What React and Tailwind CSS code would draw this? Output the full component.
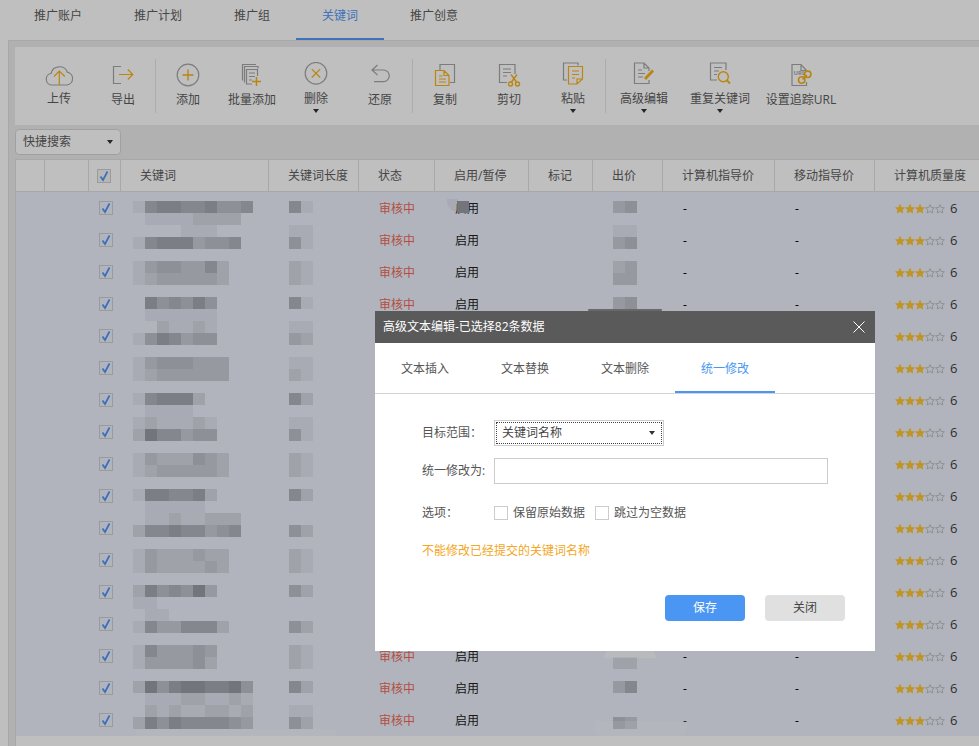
const GRAY = '#a6a6a6';
const GOLD = '#f8b31a';

const navTabs = ['推广账户', '推广计划', '推广组', '关键词', '推广创意'];

const columns = [
  { label: '', width: 'w-[29px]' },
  { label: '', width: 'w-[44px]' },
  { label: '', width: 'w-[32px]' },
  { label: '关键词', width: 'w-[148px]' },
  { label: '关键词长度', width: 'w-[90px]' },
  { label: '状态', width: 'w-[76px]' },
  { label: '启用/暂停', width: 'w-[94px]' },
  { label: '标记', width: 'w-[64px]' },
  { label: '出价', width: 'w-[70px]' },
  { label: '计算机指导价', width: 'w-[112px]' },
  { label: '移动指导价', width: 'w-[100px]' },
  { label: '计算机质量度', width: 'w-[110px]' },
];

const tones = {
  0: '',
  1: 'bg-black/5',
  2: 'bg-black/10',
  3: 'bg-black/15',
  4: 'bg-black/20',
  5: 'bg-black/25',
  6: 'bg-black/30',
  7: 'bg-black/35',
};

// redacted cells, one string per 12px line
const keywordBlur = [
  '1566556445', '0111122220', '0000111000', '1566634450', '', '1344335200', '1233333200', '',
  '0645464000', '0111111000', '0021121000', '1465344000', '', '1344433300', '1233333300', '',
  '1566620000', '0111100000', '1211121000', '2755344000', '', '1322243200', '1233333200', '',
  '1665562000', '0111110000', '0112112220', '2556553450', '', '1322232200', '1322223200', '',
  '2645473000', '1100000000', '0110000000', '1533555200', '', '1533343000', '1333342000', '',
  '2746776674', '0111221121', '0212112212', '2646555543',
];

const lengthBlur = [
  '51', '', '11', '41', '', '21', '21', '', '51', '', '11', '32', '', '11', '21', '',
  '52', '', '11', '41', '', '21', '21', '', '52', '', '', '42', '', '21', '21', '',
  '42', '', '', '42', '', '21', '21', '', '52', '', '11', '42',
];

const priceBlur = [
  '34', '', '11', '34', '', '23', '33', '', '34',
  ...Array(29).fill(''),
  '22', '', '35', '', '', '43',
];

function Blur({ lines, className }) {
  return (
    <div className={`absolute flex flex-col ${className}`}>
      {lines.map((line, i) => (
        <div key={i} className="flex h-3">
          {line.split('').map((tone, j) => (
            <span key={j} className={`h-3 w-3 ${tones[tone]}`} />
          ))}
        </div>
      ))}
    </div>
  );
}

function Icon({ children }) {
  return (
    <svg width="28" height="28" viewBox="0 0 28 28" fill="none" strokeWidth="1.2" stroke={GRAY}>
      {children}
    </svg>
  );
}

const icons = {
  upload: (
    <Icon>
      <path d="M7 23a5.8 5.8 0 0 1-1-11.5 8.6 8.6 0 0 1 16.4-1.3 6.5 6.5 0 0 1-.4 12.8Z" />
      <path d="M14.3 23V9.5M9 14.5l5.3-5.5 5.5 5.5" stroke={GOLD} />
    </Icon>
  ),
  export: (
    <Icon>
      <path d="M12 4.5H4.5v17H12" />
      <path d="M10 12.5h13.5M18.8 7.5l5 5-5 5" stroke={GOLD} />
    </Icon>
  ),
  add: (
    <Icon>
      <circle cx="14" cy="13" r="10.8" />
      <path d="M8.5 13h11M14 7.5v11" stroke={GOLD} strokeWidth="1.4" />
    </Icon>
  ),
  batch: (
    <Icon>
      <path d="M18 2.5H4.5v16M20 6.5v-2H6.5v16" />
      <path d="M19.5 14V7.5H8.5V22H14M11 11h6M11 14.5h6M11 18h3" />
      <path d="M18.5 15v9M14 19.5h9" stroke={GOLD} strokeWidth="1.5" />
    </Icon>
  ),
  remove: (
    <Icon>
      <circle cx="14" cy="11.3" r="10.8" />
      <path d="m9.8 7.1 8.4 8.4M18.2 7.1l-8.4 8.4" stroke={GOLD} />
    </Icon>
  ),
  restore: (
    <Icon>
      <path d="M11.5 3 6 8l5.5 5M6 8h11.5a5.800 5.800 0 0 1 0 11.600H8" />
    </Icon>
  ),
  copy: (
    <Icon>
      <path d="M9 8V2.5h14.500v18H19" />
      <path d="M4.500 8.500H13l5 5v10H4.500ZM13 8.500v5h5M8 14h3.500M8 17h7M8 20h7" stroke={GOLD} />
    </Icon>
  ),
  cut: (
    <Icon>
      <path d="M20 12V2.500H4.500v18H12M8 7h8M8 10.500h8M8 14h4" />
      <g stroke={GOLD} strokeWidth="1.400">
        <circle cx="15.500" cy="22" r="2" />
        <circle cx="22.500" cy="22" r="2" />
        <path d="M16.500 20 22 12.500M21.500 20 16 12.500" />
      </g>
    </Icon>
  ),
  paste: (
    <Icon>
      <path d="M19 3.500V1H4.500v17H8" />
      <path d="M9.500 4.500h14V17L18 22H9.500ZM23.500 17H18v5M13 9h7M13 12.500h7M13 16h3" stroke={GOLD} />
    </Icon>
  ),
  edit: (
    <Icon>
      <path d="M19 9V6l-5-5H4.500v20.500H19V18M14 1v5h5M8 8h4M8 11.500h7M8 15h5" />
      <path d="m15 17 8-8.500" stroke={GOLD} strokeWidth="2.800" />
    </Icon>
  ),
  duplicate: (
    <Icon>
      <path d="M20 8V1H4.500v17H11M8 5.500h8M8 9h5M8 12.500h3" />
      <g stroke={GOLD} strokeWidth="1.400">
        <circle cx="17.300" cy="14.700" r="5" />
        <path d="m21 18.500 3 3" strokeWidth="2" />
      </g>
    </Icon>
  ),
  url: (
    <Icon>
      <path d="M19.500 8.500 14 2.500H5v21h14.500V20M14 2.500v6h5.500" />
      <text x="6.500" y="13" fontSize="6" fontWeight="700" fill={GRAY} stroke="none">
        URL
      </text>
      <g stroke={GOLD} strokeWidth="1.600">
        <circle cx="14.700" cy="18" r="3.200" />
        <circle cx="20.700" cy="12.300" r="3.200" />
        <path d="m15.500 17.500 4.500-4.500" />
      </g>
    </Icon>
  ),
};

function Tool({ icon, label, width = 'w-16', caret, raised }) {
  return (
    <div className={`flex shrink-0 flex-col items-center pt-[15px] ${width}`}>
      {icons[icon]}
      <span className={`whitespace-nowrap text-[#5c5c5c] ${caret || raised ? 'mt-px' : 'mt-0.5'}`}>{label}</span>
      {caret && <Caret className="mt-0.5" />}
    </div>
  );
}

function Caret({ className = '' }) {
  return <span className={`h-0 w-0 border-x-[3px] border-t-4 border-x-transparent border-t-[#333] ${className}`} />;
}

function Divider() {
  return <div className="mt-3 h-[54px] w-px shrink-0 bg-[#e6e6e6]" />;
}

function Star({ filled }) {
  return (
    <svg width="10" height="10" viewBox="0 0 10 10" fill={filled ? '#ffc733' : 'none'} stroke={filled ? '#ffc733' : '#b5b5b5'} strokeWidth="0.8">
      <path d="m5 .6 1.3 2.900 3.100.3-2.300 2.100.7 3.100L5 7.400 2.200 9l.7-3.100L.6 3.800l3.100-.3Z" />
    </svg>
  );
}

function Check() {
  return (
    <span className="flex h-[14px] w-[14px] items-center justify-center border border-[#cfcfcf]">
      <svg width="12" height="12" viewBox="0 0 12 12" fill="none" stroke="#5397f5" strokeWidth="1.800">
        <path d="M2.500 6.500 5 10l4.500-8.500" />
      </svg>
    </span>
  );
}

// rows 4 to 13 sit fully behind the dialog in their right-hand columns
function Row({ covered }) {
  const cell = 'flex h-full shrink-0 items-center pl-5 pt-px';
  return (
    <div className="flex h-8 items-center bg-[#ecf1fc]">
      <div className="w-[73px] shrink-0" />
      <div className="flex w-[32px] shrink-0 justify-center pl-px">
        <Check />
      </div>
      <div className="w-[148px] shrink-0" />
      <div className="w-[90px] shrink-0" />
      <div className={`${cell} w-[76px] text-[#f0695a]`}>{!covered && '审核中'}</div>
      <div className={`${cell} w-[94px] text-[#222]`}>{!covered && '启用'}</div>
      <div className="w-[64px] shrink-0" />
      <div className="w-[70px] shrink-0" />
      <div className={`${cell} w-[112px] text-black`}>{!covered && '-'}</div>
      <div className={`${cell} w-[100px] text-black`}>{!covered && '-'}</div>
      <div className={`${cell} w-[104px] gap-[5px] text-[13px] text-[#3d3d3d]`}>
        <span className="flex">
          <Star filled />
          <Star filled />
          <Star filled />
          <Star />
          <Star />
        </span>
        6
      </div>
    </div>
  );
}

export default function App() {
  return (
    <div className="relative h-screen w-full overflow-hidden bg-white font-['Open_Sans','Noto_Sans_CJK_SC',sans-serif] text-xs">
      <nav className="flex h-10 pl-2">
        {navTabs.map((tab) => (
          <div
            key={tab}
            className={`flex h-10 items-center border-b-2 px-[26px] pb-1.5 ${
              tab === '关键词' ? 'border-[#5499f9] text-[#5499f9]' : 'border-transparent text-[#5c5c5c]'
            }`}
          >
            {tab}
          </div>
        ))}
      </nav>

      <div className="ml-2 flex h-[706px] flex-col border-l border-t border-[#e0e0e0] bg-[#ededed] pl-1.5 pt-1.5">
        <div className="flex h-[78px] shrink-0 bg-white pl-3">
          <Tool icon="upload" label="上传" raised />
          <Tool icon="export" label="导出" />
          <Divider />
          <Tool icon="add" label="添加" />
          <Tool icon="batch" label="批量添加" />
          <Tool icon="remove" label="删除" caret />
          <Tool icon="restore" label="还原" />
          <Divider />
          <Tool icon="copy" label="复制" />
          <Tool icon="cut" label="剪切" />
          <Tool icon="paste" label="粘贴" caret />
          <Divider />
          <Tool icon="edit" label="高级编辑" width="w-[76px]" caret />
          <Tool icon="duplicate" label="重复关键词" width="w-[76px]" caret />
          <Tool icon="url" label="设置追踪URL" width="w-[86px]" />
        </div>

        <div className="flex h-[34px] shrink-0 items-start pt-1">
          <div className="flex h-[26px] w-[106px] items-center justify-between rounded-sm border border-[#d6d6d6] bg-white pl-[7px] pr-[7px] text-[#5c5c5c]">
            快捷搜索
            <Caret />
          </div>
        </div>

        <div className="relative min-h-0 flex-1 border-l border-[#e0e0e0] bg-white">
          <div className="flex h-[33px] border-y border-[#e0e0e0]">
            {columns.map((col, i) => (
              <div
                key={i}
                className={`flex shrink-0 items-center whitespace-nowrap border-r border-[#e0e0e0] pl-[19px] pt-px text-[#5c5c5c] ${col.width}`}
              >
                {i === 2 ? (
                  <span className="-ml-[11px] bg-[#f5f5f5]">
                    <Check />
                  </span>
                ) : (
                  col.label
                )}
              </div>
            ))}
          </div>

          <div className="relative">
            {Array.from({ length: 17 }, (_, i) => (
              <Row key={i} covered={i >= 4 && i <= 13} />
            ))}
            <Blur lines={keywordBlur} className="left-[117px] top-[9px]" />
            <Blur lines={lengthBlur} className="left-[273px] top-[9px]" />
            <Blur lines={priceBlur} className="left-[597px] top-[9px]" />
            <span className="absolute left-[441px] top-[9px] h-3 w-3 bg-[#9a9da5]" />
            <span className="absolute left-[431px] top-[7px] h-[13px] w-[11px] rounded-bl-full bg-black/5" />
            <span className="absolute left-[572px] top-[117px] h-1.5 w-[74px] rounded-b-2xl bg-[#8b8b8b]" />
            <span className="absolute left-[120px] top-[537px] h-3 w-[200px] rounded-b bg-white/20" />
            <span className="absolute left-[579px] top-[529px] h-5 w-[92px] rounded-b-2xl bg-white/20" />
            <span className="absolute left-[588px] top-[456px] h-2.5 w-[52px] rounded-t-full bg-white/50" />
          </div>
        </div>
      </div>

      <div className="absolute inset-0 bg-black/25" />

      <div className="absolute left-[375px] top-[311px] h-[340px] w-[500px] bg-white text-[#555]">
        <div className="flex h-8 items-center justify-between bg-[#5a5a5a] pl-2 pr-[10px] text-white">
          高级文本编辑-已选择82条数据
          <svg width="12" height="12" viewBox="0 0 12 12" fill="none" stroke="white" strokeWidth="1">
            <path d="m.5.5 11 11M11.500.5l-11 11" />
          </svg>
        </div>

        <div className="flex h-[51px] border-b border-[#d4d4d4]">
          {['文本插入', '文本替换', '文本删除', '统一修改'].map((tab) => (
            <div
              key={tab}
              className={`flex h-[50px] w-[100px] items-center justify-center border-b-2 pt-1 ${
                tab === '统一修改' ? 'border-[#4a96f2] text-[#4a96f2]' : 'border-transparent'
              }`}
            >
              {tab}
            </div>
          ))}
        </div>

        <div className="flex flex-col pl-[47px] pt-[26px]">
          <div className="flex h-[26px] items-center">
            <span className="w-[72px]">目标范围：</span>
            <div className="flex h-[26px] w-[170px] items-center border border-[#ccc] p-px">
              <div className="flex h-full w-full items-center justify-between border border-dotted border-[#444] pl-[5px] pr-[6px] text-[#444]">
                关键词名称
                <Caret />
              </div>
            </div>
          </div>
          <div className="mt-3 flex h-[26px] items-center">
            <span className="w-[72px]">统一修改为:</span>
            <div className="h-[26px] w-[334px] border border-[#ccc]" />
          </div>
          <div className="mt-[22px] flex h-[14px] items-center">
            <span className="w-[72px]">选项：</span>
            <span className="h-[14px] w-[14px] border border-[#ccc]" />
            <span className="ml-[5px] w-[82px]">保留原始数据</span>
            <span className="h-[14px] w-[14px] border border-[#ccc]" />
            <span className="ml-[5px]">跳过为空数据</span>
          </div>
          <p className="mt-[23px] text-[#f5a623]">不能修改已经提交的关键词名称</p>
          <div className="mt-9 flex justify-end gap-5 pr-[30px]">
            <button className="h-[26px] w-20 rounded-sm bg-[#4a96f2] text-white">保存</button>
            <button className="h-[26px] w-20 rounded-sm bg-[#e0e0e0] text-[#444]">关闭</button>
          </div>
        </div>
      </div>
    </div>
  );
}
